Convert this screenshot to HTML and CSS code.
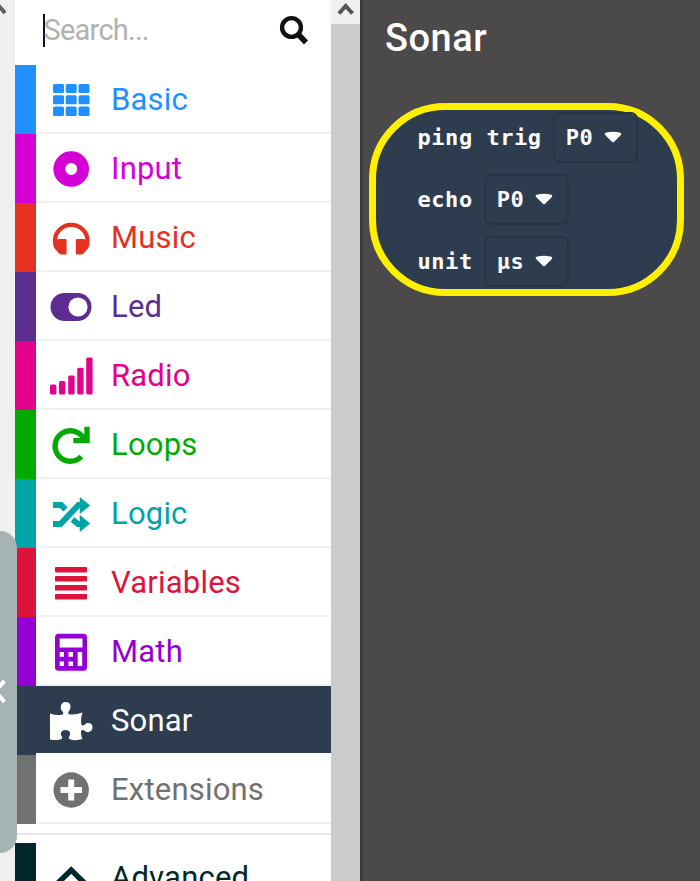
FILE: index.html
```html
<!DOCTYPE html>
<html lang="en">
<head>
<meta charset="utf-8">
<title>Blocks editor</title>
<link rel="stylesheet" href="styles.css">
</head>
<body>
<div class="editor">
  <aside class="gutter">
    <svg class="gutter-arrow" viewBox="0 0 6 20"><path d="M-9 13L-2 5L5 13" fill="none" stroke="#606060" stroke-width="4"/></svg>
    <div class="collapse"><svg viewBox="0 0 17 30"><path d="M4.500 4L-5 14L4.500 25" fill="none" stroke="#fff" stroke-width="4"/></svg></div>
  </aside>
  <nav class="toolbox">
    <div class="search">
      <span class="caret"></span><span class="placeholder">Search...</span>
      <svg class="search-icon" viewBox="0 0 30 30"><circle cx="12.500" cy="12.500" r="9.400" fill="none" stroke="#111" stroke-width="4.400"/><path d="M18.500 18.500L27 27.500" stroke="#111" stroke-width="5.500"/></svg>
    </div>
    <div class="category basic"><svg class="icon" viewBox="0 0 44 44" fill="currentColor"><rect x="4" y="7" width="11" height="9" rx="1.500"/><rect x="16.700" y="7" width="11" height="9" rx="1.500"/><rect x="29.500" y="7" width="11" height="9" rx="1.500"/><rect x="4" y="18.300" width="11" height="9" rx="1.500"/><rect x="16.700" y="18.300" width="11" height="9" rx="1.500"/><rect x="29.500" y="18.300" width="11" height="9" rx="1.500"/><rect x="4" y="29.500" width="11" height="9.500" rx="1.500"/><rect x="16.700" y="29.500" width="11" height="9.500" rx="1.500"/><rect x="29.500" y="29.500" width="11" height="9.500" rx="1.500"/></svg><span>Basic</span></div>
    <div class="category input"><svg class="icon" viewBox="0 0 44 44"><circle cx="22.200" cy="23" r="11.900" fill="none" stroke="currentColor" stroke-width="11.800"/></svg><span>Input</span></div>
    <div class="category music"><svg class="icon" viewBox="0 0 44 44"><path d="M6 27.500V25.500A16.200 15.600 0 0 1 38.500 25.500V27.500" fill="none" stroke="currentColor" stroke-width="4.300"/><path d="M17.600 24.500V38.500Q17.600 39.500 16 39.500H13Q10 39.500 8 36C5 34 4 31 4 27.500Q7 24 11 24H16Q17.600 24 17.600 25ZM26.800 24.500V38.500Q26.800 39.500 28.500 39.500H31.500Q34.500 39.500 36.500 36C39.500 34 40.500 31 40.500 27.500Q37.500 24 33.500 24H28.500Q26.800 24 26.800 25Z" fill="currentColor"/></svg><span>Music</span></div>
    <div class="category led"><svg class="icon" viewBox="0 0 44 44"><rect x="1.500" y="9" width="41" height="28" rx="14" fill="currentColor"/><circle cx="29" cy="23" r="9.600" fill="#fff"/></svg><span>Led</span></div>
    <div class="category radio"><svg class="icon" viewBox="0 0 44 44" fill="currentColor"><rect x="1" y="31.500" width="6.400" height="10" rx="1.500"/><rect x="10" y="28" width="6.400" height="13.500" rx="1.500"/><rect x="19.200" y="22.500" width="6.400" height="19" rx="1.500"/><rect x="28.200" y="14.700" width="6.400" height="26.800" rx="1.500"/><rect x="37.200" y="4.500" width="6.400" height="37" rx="1.500"/></svg><span>Radio</span></div>
    <div class="category loops"><svg class="icon" viewBox="0 0 44 44"><path d="M34.500 16.500A15.200 15.200 0 1 0 32.300 34.500" fill="none" stroke="currentColor" stroke-width="5.400"/><path d="M35.300 4.800H40.700V21.200H24.300V16H31L35.300 12Z" fill="currentColor"/></svg><span>Loops</span></div>
    <div class="category logic"><svg class="icon" viewBox="0 0 44 44"><path d="M4 14H12L16.500 18.500M4 33H11.500L29.500 14H34M23.500 28.500L29 33H34" fill="none" stroke="currentColor" stroke-width="6"/><path d="M31 6.500L40.800 14.500L31 22.500ZM31 24.500L40.800 32.500L31 40.500Z" fill="currentColor" stroke="currentColor" stroke-width=".6" stroke-linejoin="round"/></svg><span>Logic</span></div>
    <div class="category variables"><svg class="icon" viewBox="0 0 44 44" fill="currentColor"><rect x="6" y="7" width="32" height="5.500" rx=".8"/><rect x="6" y="16" width="32" height="5.500" rx=".8"/><rect x="6" y="25" width="32" height="5.500" rx=".8"/><rect x="6" y="34" width="32" height="5.500" rx=".8"/></svg><span>Variables</span></div>
    <div class="category math"><svg class="icon" viewBox="0 0 44 44"><rect x="6" y="4.700" width="32" height="37" rx="3.500" fill="currentColor"/><path d="M10.700 9.500H33.500V18.500H10.700ZM10.700 23H15V27.700H10.700ZM19.500 23H24V27.700H19.500ZM28.700 23H33.200V37H28.700ZM10.700 32.500H15V37H10.700ZM19.500 32.500H24V37H19.500Z" fill="#fff"/></svg><span>Math</span></div>
    <div class="category sonar"><svg class="icon" viewBox="0 0 44 44"><path d="M1 15.500Q8 18 13.500 16.500C15 16 14.500 14.500 13 13C11 10.500 11 4.300 16.500 4C22.500 4 22.500 10 20 13C18.500 15 19 16 21 16.500Q27 17 33.500 14.500Q31.500 21 32.200 25C32.500 28 34 28.300 36 26.500C39 23.500 43.500 25.500 43.500 29C43.500 34 39 35.500 36 33C33 30.500 31.500 33 32 35.500Q32.500 39.500 33.500 41Q27 43 21.500 41.500C19 40.500 19.500 39.500 20.500 38C22 35 20.500 32 16.500 32C12.500 32 11 35 12.500 38C14 40 13 41 11 41.500Q6 42.500 1 41.500Z" fill="currentColor"/></svg><span>Sonar</span></div>
    <div class="category extensions"><svg class="icon" viewBox="0 0 44 44"><circle cx="22.200" cy="23" r="17.700" fill="currentColor"/><path d="M22.200 12.500V33.500M11.500 23H33" stroke="#fff" stroke-width="6"/></svg><span>Extensions</span></div>
    <div class="divider"></div>
    <div class="category advanced"><svg class="icon" viewBox="0 0 44 44"><path d="M8 29L22.200 15L36.400 29" fill="none" stroke="currentColor" stroke-width="5.500"/></svg><span>Advanced</span></div>
  </nav>
  <div class="scrollbar"><div class="scroll-up"><svg viewBox="0 0 29 24"><path d="M8 13.500L14.700 6L21.500 13.500" fill="none" stroke="#555" stroke-width="4"/></svg></div></div>
  <main class="flyout">
    <h1>Sonar</h1>
    <div class="block">
      <div class="field"><span>ping trig</span><div class="dropdown"><span>P0</span><svg viewBox="0 0 18 14"><path d="M2 3Q9 1 16 3L9 10Z"/></svg></div></div>
      <div class="field"><span>echo</span><div class="dropdown"><span>P0</span><svg viewBox="0 0 18 14"><path d="M2 3Q9 1 16 3L9 10Z"/></svg></div></div>
      <div class="field"><span>unit</span><div class="dropdown"><span>µs</span><svg viewBox="0 0 18 14"><path d="M2 3Q9 1 16 3L9 10Z"/></svg></div></div>
    </div>
  </main>
</div>
</body>
</html>
```
FILE: styles.css
```css
* { box-sizing: border-box; }
body { margin: 0; overflow: hidden; font-family: Roboto, sans-serif; }
.editor { display: flex; width: 700px; height: 881px; overflow: hidden; }
.gutter { position: relative; z-index: 1; flex: none; width: 15px; background: #efefef; }
.gutter-arrow { display: block; width: 6px; height: 20px; }
.collapse { position: absolute; top: 531px; left: -17px; width: 33.500px; height: 322px; border-radius: 17px; background: #a5b3b4; display: flex; align-items: center; justify-content: flex-end; }
.collapse svg { width: 17px; height: 30px; }
.toolbox { flex: none; width: 316px; height: 881px; overflow: hidden; background: #fff; }
.search { display: flex; align-items: center; height: 65px; padding: 0 22px 5px 28px; }
.caret { width: 1.500px; height: 33px; background: #111; }
.placeholder { flex: 1; margin-left: -1px; font-size: 29px; line-height: 60px; letter-spacing: -.75px; color: #b1b1b1; }
.search-icon { width: 30px; height: 30px; }
.category { position: relative; display: flex; align-items: center; height: 69px; padding-left: 13px; border-left: 21px solid currentColor; font-size: 31px; letter-spacing: .2px; line-height: 68px; }
.category::after { content: ""; position: absolute; left: 1px; right: 0; bottom: 0; height: 2px; background: #edf1f1; }
.icon { flex: none; width: 44px; height: 44px; margin: 0 18px 2px 0; }
.basic { color: #1e90ff; }
.input { color: #d400d4; }
.music { color: #e63022; }
.led { color: #5c2d91; }
.radio { color: #e3008c; }
.loops { color: #00aa00; }
.logic { color: #00a4a6; }
.variables { color: #dc143c; }
.math { color: #9400d3; }
.sonar { border-left-color: #2d3d4f; background: linear-gradient(#2d3d4f 67px, #fff 67px); color: #fff; }
.sonar::after { display: none; }
.extensions { color: #717171; }
.divider { height: 19px; background: linear-gradient(#fff 9px, #e6e8e8 9px, #e6e8e8 11px, #fff 11px); }
.advanced { color: #00272b; }
.scrollbar { flex: none; width: 29px; background: #cbcbcb; }
.scroll-up { height: 24px; background: #f0f0f0; }
.scroll-up svg { display: block; width: 29px; height: 24px; }
.flyout { flex: 1; border-left: 3px solid #3b3d3e; background: #4b4949; }
h1 { margin: 15px 0 42px 22px; color: #fff; font-size: 38px; font-weight: 500; letter-spacing: .5px; line-height: 46px; }
.block { width: 315px; height: 193px; margin-left: 6px; padding: 2px 0 0 41.500px; border: 7px solid #fff000; border-radius: 76px; background: #2d3d4f; color: #fff; font: bold 22px/48px "DejaVu Sans Mono", monospace; letter-spacing: .55px; }
.field { display: flex; align-items: center; height: 51px; margin-bottom: 11px; white-space: nowrap; }
.dropdown { display: flex; align-items: center; width: 85px; height: 51px; margin-left: 11px; padding-left: 11px; border: 2px solid #253542; border-radius: 7px; }
.dropdown svg { width: 18px; height: 14px; margin-left: 11px; fill: #fff; stroke: #fff; stroke-width: 2.500; stroke-linejoin: round; }
```
